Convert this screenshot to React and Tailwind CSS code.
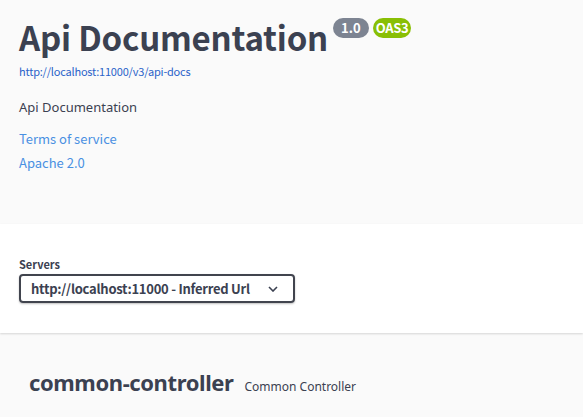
import React from "react";

const kr = { fontFamily: '"Noto Sans CJK KR", "Noto Sans", sans-serif' };
const os = { fontFamily: '"Noto Sans", "Open Sans", sans-serif' };

export default function App() {
  return (
    <div className="w-[583px] h-[417px] overflow-hidden bg-[#fafafa] text-[#3b4151]" style={kr}>
      <div className="h-[224px] px-[19px] pt-[14px]">
        <div className="flex items-start">
          <h1 className="text-[33px] leading-[46px] font-semibold text-[#3b4151] tracking-[-0.2px]">Api Documentation</h1>
          <div className="flex gap-[4px] ml-[5px] mt-[4px]">
            <span className="h-[20px] px-[8px] rounded-full bg-[#7d8492] text-white text-[13px] font-bold leading-[20px]">1.0</span>
            <span className="h-[20px] px-[3px] rounded-full bg-[#89bf04] text-white text-[13px] font-bold leading-[20px] tracking-[-0.3px]">OAS3</span>
          </div>
        </div>
        <div className="mt-[3px] text-[11px] leading-[16px] text-[#2a63c9] tracking-[-0.2px]">http://localhost:11000/v3/api-docs</div>
        <div className="mt-[18px] text-[13px] leading-[20px] text-[#3b4151]" style={os}>Api Documentation</div>
        <div className="mt-[12px] text-[13px] leading-[20px] text-[#4990e2]">Terms of service</div>
        <div className="mt-[4px] text-[13px] leading-[20px] text-[#4990e2]">Apache 2.0</div>
      </div>
      <div className="h-[109px] bg-white shadow-[0_1px_2px_0_rgba(0,0,0,0.15)] px-[19px] pt-[32px] relative">
        <div className="text-[11px] leading-[16px] font-bold text-[#3b4151]">Servers</div>
        <div className="mt-[2px] w-[276px] h-[29px] border-2 border-[#41444e] rounded-[4px] shadow-[0_1px_2px_0_rgba(0,0,0,0.25)] flex items-center pl-[10px] pr-[15px]">
          <span className="text-[13px] font-semibold text-[#3b4151] flex-1 leading-[20px] whitespace-nowrap tracking-[-0.25px]">http://localhost:11000 - Inferred Url</span>
          <svg width="10" height="6" viewBox="0 0 10 6" fill="none">
            <path d="M1 1l4 4 4-4" stroke="#3b4151" strokeWidth="1.6" />
          </svg>
        </div>
      </div>
      <div className="px-[29px] pt-[34px] flex items-baseline">
        <span className="text-[22px] font-bold text-[#3b4151] leading-[30px] tracking-[-0.4px]" style={os}>common-controller</span>
        <span className="ml-[11px] text-[12px] text-[#3b4151]" style={os}>Common Controller</span>
      </div>
    </div>
  );
}
